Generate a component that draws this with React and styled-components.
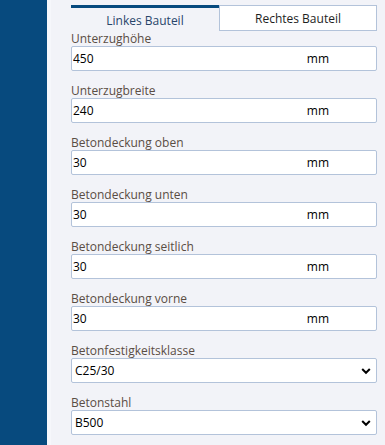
import React from "react";
import styled, { createGlobalStyle } from "styled-components";

const Global = createGlobalStyle`
  html, body { margin: 0; padding: 0; background: #f2f3f8; }
  body { font-family: "Open Sans", "Noto Sans", sans-serif; }
`;

const Page = styled.div`
  display: flex;
  min-height: 445px;
  background: #f2f3f8;
`;

const Sidebar = styled.div`
  width: 47px;
  flex: 0 0 47px;
  background: #074a7e;
  border-right: 4px solid #f6f7fb;
`;

const Main = styled.div`
  width: 306px;
  padding: 5px 0 0 20px;
  display: flex;
  flex-direction: column;
`;

const Tabs = styled.div`
  display: flex;
  height: 26px;
`;

const Tab = styled.div`
  box-sizing: border-box;
  flex: 0 0 ${(p) => p.$w}px;
  display: flex;
  align-items: center;
  justify-content: center;
  font-size: 12px;
  color: ${(p) => (p.$active ? "#28456a" : "#1e1e1e")};
  background: ${(p) => (p.$active ? "transparent" : "#ffffff")};
  border: ${(p) => (p.$active ? "none" : "1px solid #b3c3da")};
  border-top: ${(p) => (p.$active ? "3px solid #074a7e" : "1px solid #b3c3da")};
  padding-top: ${(p) => (p.$active ? "1px" : "0")};
`;

const Field = styled.div`
  display: flex;
  flex-direction: column;
  margin-bottom: 12px;
`;

const Label = styled.div`
  font-size: 12px;
  line-height: 15px;
  color: #5a4d44;
`;

const Box = styled.div`
  box-sizing: border-box;
  height: 25px;
  display: flex;
  align-items: center;
  background: #fff;
  border: 1px solid #b3c3da;
  border-radius: 2px;
`;

const Input = styled.input`
  flex: 1;
  min-width: 0;
  border: none;
  outline: none;
  background: transparent;
  font-family: inherit;
  font-size: 12px;
  color: #000;
  padding: 0 0 0 1px;
`;

const Unit = styled.span`
  font-size: 12px;
  color: #000;
  margin-right: 47px;
`;

const SelectBox = styled(Box)`
  position: relative;
`;

const Select = styled.select`
  appearance: none;
  -webkit-appearance: none;
  flex: 1;
  height: 100%;
  border: none;
  outline: none;
  background: transparent;
  font-family: inherit;
  font-size: 12px;
  color: #000;
  padding: 0 0 0 3px;
`;

const Chevron = styled.svg`
  position: absolute;
  right: 5px;
  top: 8px;
  pointer-events: none;
`;

const numeric = [
  ["Unterzughöhe", "450"],
  ["Unterzugbreite", "240"],
  ["Betondeckung oben", "30"],
  ["Betondeckung unten", "30"],
  ["Betondeckung seitlich", "30"],
  ["Betondeckung vorne", "30"],
];

const selects = [
  ["Betonfestigkeitsklasse", "C25/30"],
  ["Betonstahl", "B500"],
];

export default function App() {
  return (
    <>
      <Global />
      <Page>
        <Sidebar />
        <Main>
          <Tabs>
            <Tab $active $w={148}>Linkes Bauteil</Tab>
            <Tab $w={158}>Rechtes Bauteil</Tab>
          </Tabs>
          {numeric.map(([l, v]) => (
            <Field key={l}>
              <Label>{l}</Label>
              <Box>
                <Input defaultValue={v} />
                <Unit>mm</Unit>
              </Box>
            </Field>
          ))}
          {selects.map(([l, v]) => (
            <Field key={l}>
              <Label>{l}</Label>
              <SelectBox>
                <Select defaultValue={v}>
                  <option>{v}</option>
                </Select>
                <Chevron width="10" height="8" viewBox="0 0 10 8">
                  <path d="M1.2 2 L5 5.8 L8.8 2" fill="none" stroke="#000" strokeWidth="2" />
                </Chevron>
              </SelectBox>
            </Field>
          ))}
        </Main>
      </Page>
    </>
  );
}
